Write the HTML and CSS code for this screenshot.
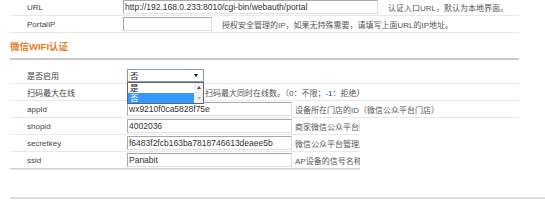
FILE: index.html
```html
<!DOCTYPE html>
<html lang="zh-CN">
<head>
  <meta charset="UTF-8">
  <title>微信WIFI认证</title>
  <link rel="stylesheet" href="styles.css">
</head>
<body>
<div class="page">
  <div class="form form-top">
    <div class="row">
      <span class="label">URL</span>
      <input class="field field-url" type="text" value="http://192.168.0.233:8010/cgi-bin/webauth/portal">
      <span class="hint">认证入口URL，默认为本地界面。</span>
    </div>
    <div class="row">
      <span class="label">PortalIP</span>
      <input class="field field-ip" type="text" value="">
      <span class="hint">授权安全管理的IP，如果无特殊需要，请填写上面URL的IP地址。</span>
    </div>
  </div>

  <h2 class="section-title">微信WIFI认证</h2>

  <div class="form form-wifi">
    <div class="row">
      <span class="label">是否启用</span>
      <div class="select-wrap">
        <div class="select"><span>否</span><span class="arrow"></span></div>
        <div class="dropdown">
          <div class="options">
            <div class="option">是</div>
            <div class="option selected">否</div>
          </div>
          <div class="scrollbar">
            <span class="up"></span>
            <span class="down"></span>
          </div>
        </div>
      </div>
    </div>
    <div class="row">
      <span class="label">扫码最大在线</span>
      <input class="field field-short" type="text" value="0">
      <span class="hint">扫码最大同时在线数。（0：不限；<span class="blue">-1</span>：拒绝）</span>
    </div>
    <div class="row">
      <span class="label">appId</span>
      <input class="field field-wide" type="text" value="wx9210f0ca5828f75e">
      <span class="hint">设备所在门店的ID（微信公众平台门店）</span>
    </div>
    <div class="clip">
      <div class="row">
        <span class="label">shopid</span>
        <input class="field field-wide" type="text" value="4002036">
        <span class="hint">商家微信公众平台账号ID</span>
      </div>
      <div class="row">
        <span class="label">secretkey</span>
        <input class="field field-wide" type="text" value="f6483f2fcb163ba7818746613deaee5b">
        <span class="hint">微信公众平台管理后台获取的secretkey</span>
      </div>
      <div class="row">
        <span class="label">ssid</span>
        <input class="field field-wide" type="text" value="Panabit">
        <span class="hint">AP设备的信号名称</span>
      </div>
    </div>
  </div>

  <div class="footer-line"></div>
</div>
</body>
</html>
```

FILE: styles.css
```css
* {
  box-sizing: border-box;
}

body {
  margin: 0;
  background: #fff;
  color: #444;
  font-family: "Liberation Sans", "Noto Sans CJK SC", sans-serif;
  font-size: 8px;
}

.page {
  padding-left: 10px;
}

.form {
  width: 509px;
}

.form-top {
  margin-top: -1px;
}

.row {
  display: flex;
  align-items: center;
  height: 17px;
  border-bottom: 1px solid #e9e9e9;
  white-space: nowrap;
}

.label {
  flex: none;
  padding-left: 17px;
  color: #444;
}

.form-top .label {
  width: 113px;
}

.form-wifi .label {
  width: 117px;
}

.field {
  flex: none;
  height: 14px;
  margin: 0;
  padding: 0 1px;
  border: 1px solid;
  border-color: #a8a8a8 #dedede #dedede #a8a8a8;
  background: #fff;
  color: #333;
  font: 8.5px "Liberation Sans", "Noto Sans CJK SC", sans-serif;
  outline: none;
}

.field-url {
  width: 255px;
  margin-right: 10px;
}

.field-ip {
  width: 89px;
  margin-right: 10px;
}

.field-wide {
  width: 165px;
  margin-right: 3px;
}

.field-short {
  width: 75px;
  margin-right: 3px;
}

.hint {
  color: #555;
}

.blue {
  color: #1b3b9c;
}

.section-title {
  width: 509px;
  margin: 7px 0 0;
  padding-bottom: 5px;
  border-bottom: 2px solid #c9c9c9;
  color: #e87b1c;
  font-size: 9.5px;
  font-weight: bold;
  line-height: 13px;
}

.form-wifi {
  margin-top: 7px;
}

/* open select box */
.select-wrap {
  position: relative;
  flex: none;
  width: 77px;
}

.select {
  display: flex;
  align-items: center;
  justify-content: space-between;
  height: 13px;
  padding: 0 5px 0 2px;
  border: 1px solid #7f9db9;
  background: #fff;
  color: #222;
  font-size: 8.5px;
}

.arrow {
  width: 0;
  height: 0;
  border-left: 2.5px solid transparent;
  border-right: 2.5px solid transparent;
  border-top: 3px solid #111;
}

.dropdown {
  position: absolute;
  left: 0;
  top: 13px;
  z-index: 2;
  display: flex;
  width: 77px;
  border: 1px solid #646464;
  background: #fff;
}

.options {
  flex: 1;
}

.option {
  height: 10px;
  padding-left: 2px;
  color: #222;
  font-size: 8.5px;
  line-height: 10px;
}

.option.selected {
  background: #3399ff;
  color: #fff;
}

.scrollbar {
  display: flex;
  flex-direction: column;
  align-items: center;
  justify-content: space-between;
  width: 9px;
  padding: 3px 0;
  background: #f0f0f0;
}

.up {
  width: 0;
  height: 0;
  border-left: 2.5px solid transparent;
  border-right: 2.5px solid transparent;
  border-bottom: 3px solid #555;
}

.down {
  width: 0;
  height: 0;
  border-left: 2.5px solid transparent;
  border-right: 2.5px solid transparent;
  border-top: 3px solid #bbb;
}

/* lower rows only painted up to here in the capture */
.clip {
  width: 350px;
  overflow: hidden;
  border-bottom: 1px solid #e9e9e9;
}

.clip .row {
  width: 509px;
}

.clip .row:last-child {
  border-bottom-color: #cfcfcf;
}

.footer-line {
  height: 2px;
  margin-top: 27px;
  background: #dedede;
}
```
